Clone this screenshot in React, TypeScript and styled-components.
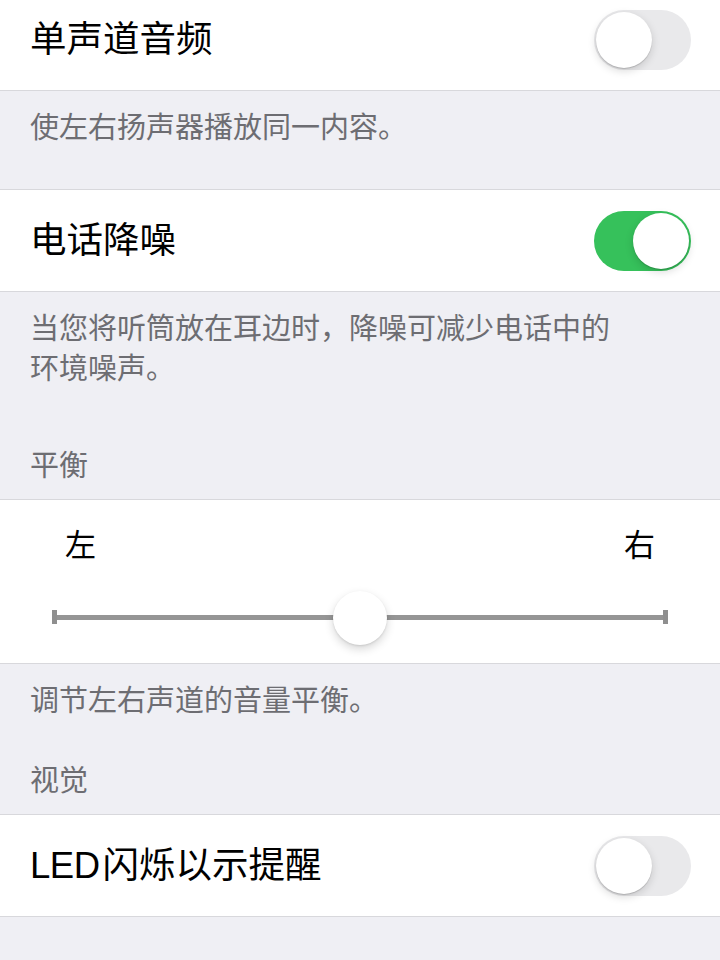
import styled, {createGlobalStyle} from "styled-components";

const GlobalStyle = createGlobalStyle`
  html, body {
    margin: 0;
    padding: 0;
    background: #efeff4;
  }
  body {
    font-family: "Liberation Sans", "Noto Sans CJK SC", sans-serif;
    -webkit-font-smoothing: antialiased;
  }
`;

const Page = styled.div`
  width: 720px;
  height: 960px;
  overflow: hidden;
  background: #efeff4;
`;

const List = styled.div`
  margin-top: -12px;
  display: flex;
  flex-direction: column;
`;

const Group = styled.div`
  background: #fff;
  border-top: 1px solid #d8d8dc;
  border-bottom: 1px solid #d8d8dc;
`;

const Cell = styled.div`
  height: 101px;
  display: flex;
  align-items: center;
  justify-content: space-between;
  padding: 0 29px 0 30px;
`;

const Title = styled.span`
  font-size: 36.5px;
  line-height: 44px;
  color: #000;
`;

const Tag = styled.span`
  margin-right: 3px;
  letter-spacing: -0.5px;
`;

const Footer = styled.div<{$gap: number}>`
  padding: 17px 30px ${(p) => p.$gap}px;
  font-size: 29px;
  line-height: 40px;
  color: #6d6d72;
`;

const Header = styled.div`
  padding: 0 30px 13px;
  font-size: 29px;
  line-height: 40px;
  color: #6d6d72;
`;

const Track = styled.div<{$on: boolean}>`
  position: relative;
  width: 97px;
  height: 60px;
  border-radius: 30px;
  background: ${(p) => (p.$on ? "#36c15b" : "#e9e9eb")};
  flex-shrink: 0;
`;

const Knob = styled.div<{$on: boolean}>`
  position: absolute;
  top: 2px;
  left: ${(p) => (p.$on ? "39px" : "2px")};
  width: 56px;
  height: 56px;
  border-radius: 50%;
  background: #fff;
  box-shadow: 0 3px 8px rgba(0, 0, 0, 0.15), 0 1px 1px rgba(0, 0, 0, 0.16);
`;

const Toggle = ({on}: {on: boolean}) => (
  <Track $on={on}>
    <Knob $on={on} />
  </Track>
);

const SliderCell = styled.div`
  height: 163px;
  padding-top: 25px;
  box-sizing: border-box;
  display: flex;
  flex-direction: column;
`;

const Ends = styled.div`
  display: flex;
  justify-content: space-between;
  padding: 0 65px;
  font-size: 31px;
  line-height: 42px;
  color: #000;
`;

const Rail = styled.div`
  position: relative;
  margin: 24px 52px 0;
  height: 52px;
  display: flex;
  align-items: center;
`;

const Line = styled.div`
  flex: 1;
  height: 5px;
  background: #959595;
`;

const Cap = styled.div`
  width: 5px;
  height: 14px;
  background: #8f8f8f;
`;

const Thumb = styled.div`
  position: absolute;
  top: 0;
  width: 54px;
  height: 54px;
  margin-left: -27px;
  border-radius: 50%;
  background: #fff;
  box-shadow: 0 4px 10px rgba(0, 0, 0, 0.16), 0 1px 2px rgba(0, 0, 0, 0.1);
`;

const Balance = ({value}: {value: number}) => (
  <SliderCell>
    <Ends>
      <span>左</span>
      <span>右</span>
    </Ends>
    <Rail>
      <Cap />
      <Line />
      <Cap />
      <Thumb style={{left: `${value * 100}%`}} />
    </Rail>
  </SliderCell>
);

export default function App() {
  return (
    <Page>
      <GlobalStyle />
      <List>
        <Group>
          <Cell>
            <Title>单声道音频</Title>
            <Toggle on={false} />
          </Cell>
        </Group>
        <Footer $gap={41}>使左右扬声器播放同一内容。</Footer>

        <Group>
          <Cell>
            <Title>电话降噪</Title>
            <Toggle on />
          </Cell>
        </Group>
        <Footer $gap={57}>
          当您将听筒放在耳边时，降噪可减少电话中的
          <br />
          环境噪声。
        </Footer>

        <Header>平衡</Header>
        <Group>
          <Balance value={0.5} />
        </Group>
        <Footer $gap={40}>调节左右声道的音量平衡。</Footer>

        <Header>视觉</Header>
        <Group>
          <Cell>
            <Title>
              <Tag>LED</Tag>闪烁以示提醒
            </Title>
            <Toggle on={false} />
          </Cell>
        </Group>
      </List>
    </Page>
  );
}
